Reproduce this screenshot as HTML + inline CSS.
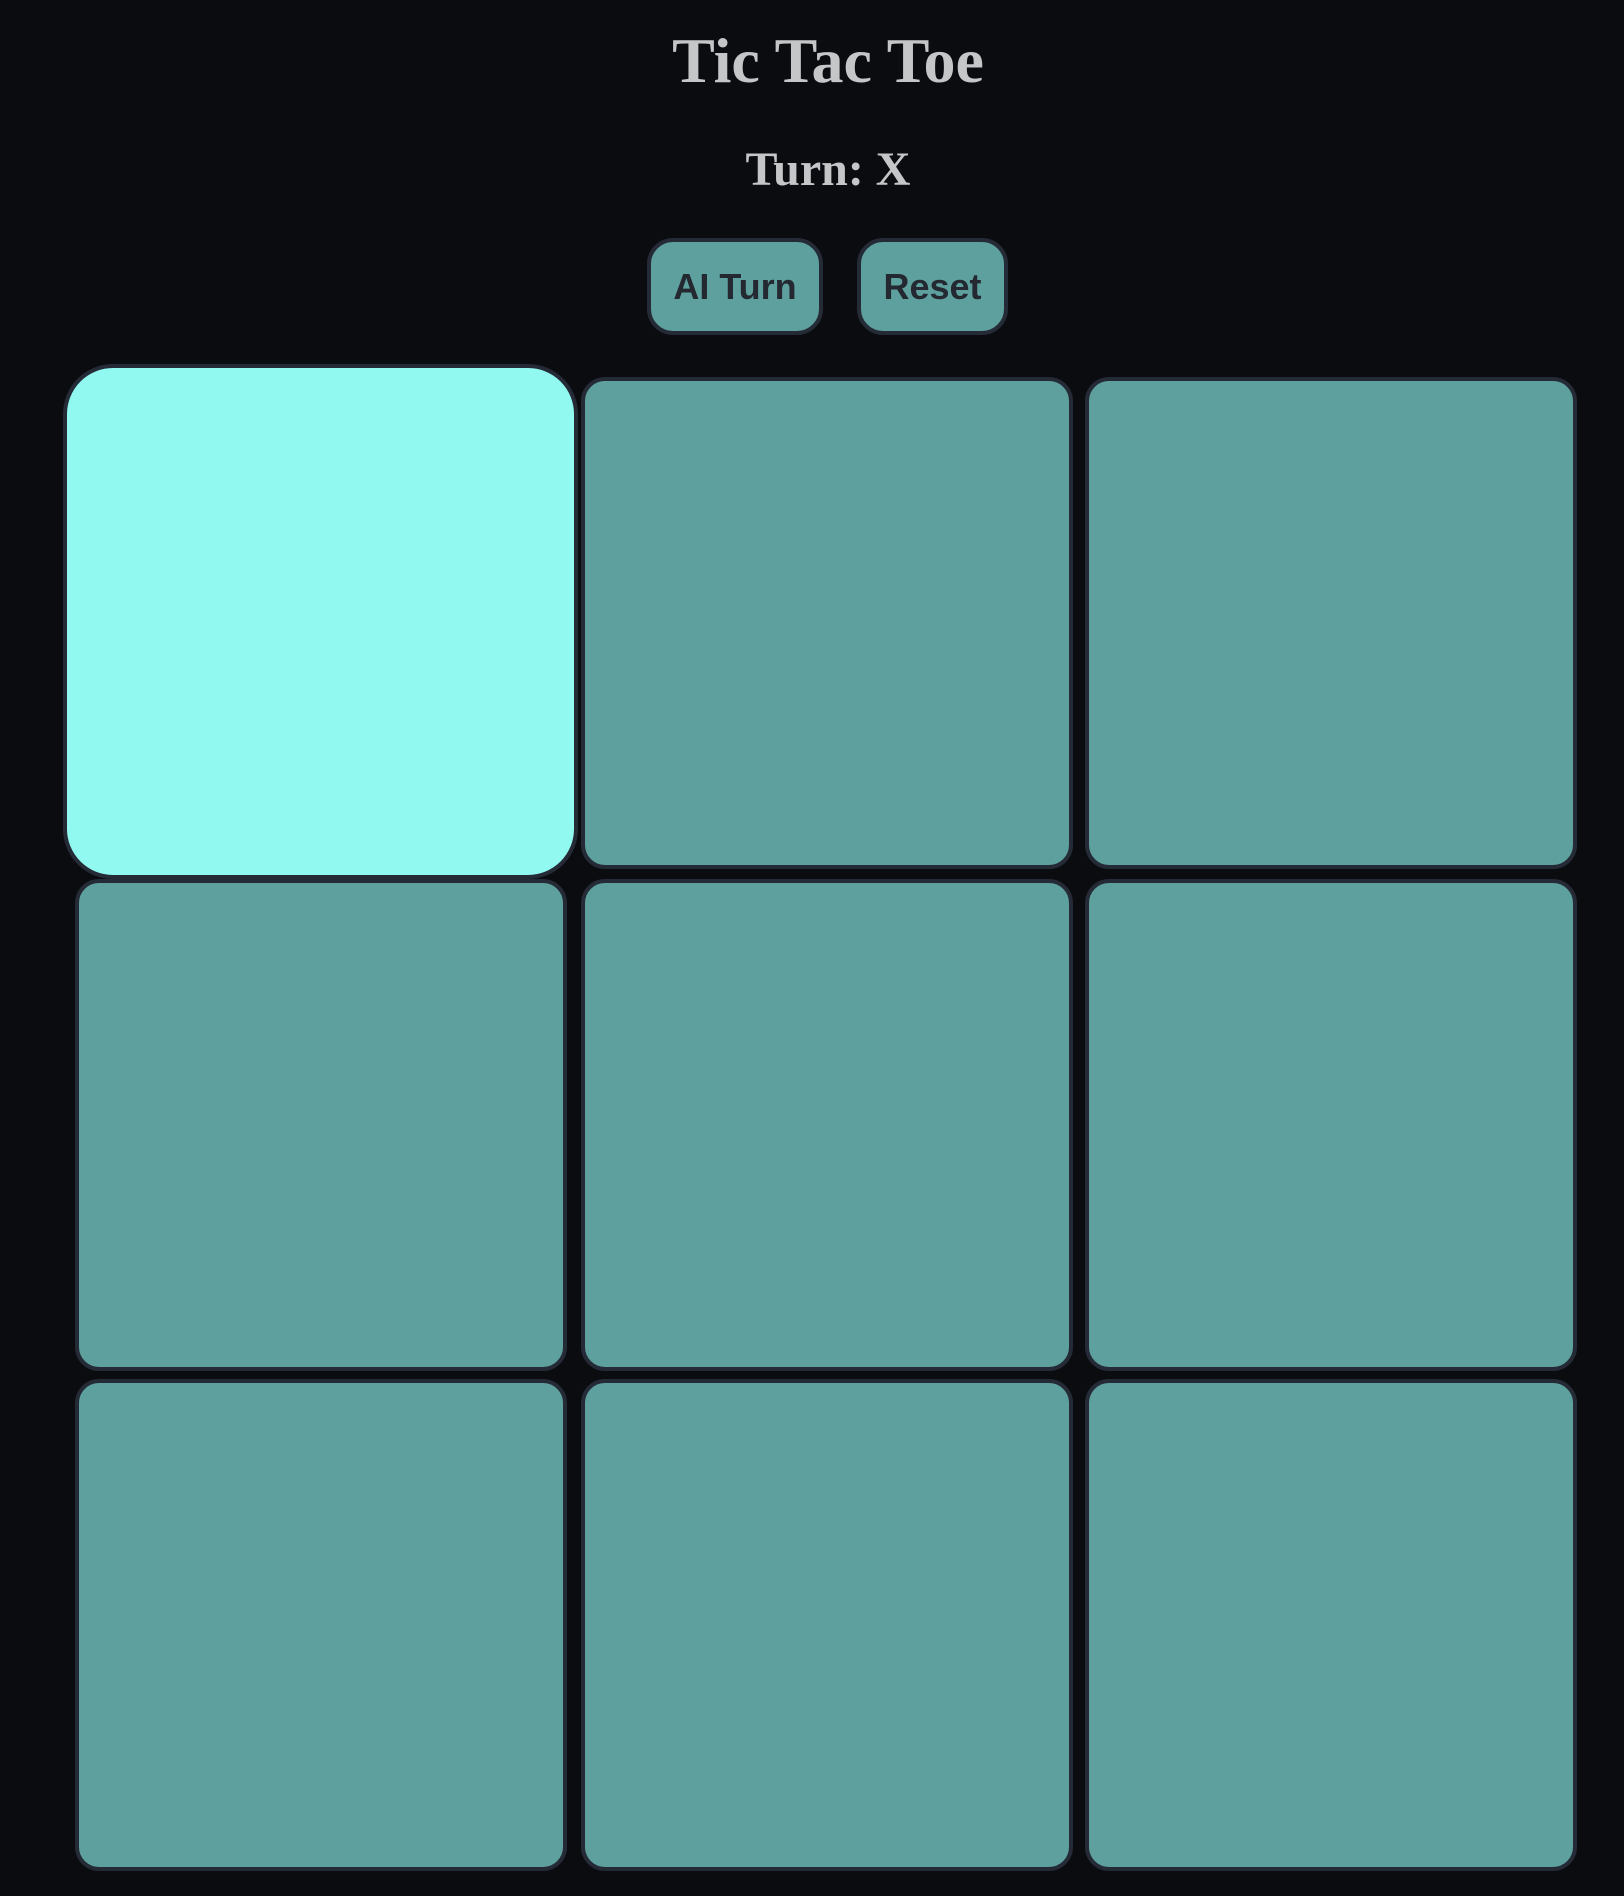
<!DOCTYPE html>
<html><head><meta charset="utf-8"><style>
html,body{margin:0;padding:0;background:#0b0c10;width:1624px;height:1896px;overflow:hidden;}
.t{position:absolute;left:16px;width:1624px;text-align:center;font-family:"Liberation Serif",serif;font-weight:bold;color:#c5c6c7;line-height:1;}
.b{position:absolute;top:238px;height:97px;box-sizing:border-box;border:4px solid #252b36;border-radius:26px;background:#5ea09e;color:#232831;font:bold 36px "Liberation Sans",sans-serif;display:flex;align-items:center;justify-content:center;}
.c{position:absolute;box-sizing:border-box;border:4px solid #252b36;border-radius:24px;background:#5ea09e;width:492px;height:492px;}
</style></head><body>
<div class="t" style="top:29px;font-size:64px;">Tic Tac Toe</div>
<div class="t" style="top:146px;font-size:48px;">Turn: X</div>
<div class="b" style="left:647px;width:176px;">AI Turn</div>
<div class="b" style="left:857px;width:151px;">Reset</div>
<div class="c" style="left:581px;top:377px;"></div>
<div class="c" style="left:1085px;top:377px;"></div>
<div class="c" style="left:75px;top:879px;"></div>
<div class="c" style="left:581px;top:879px;"></div>
<div class="c" style="left:1085px;top:879px;"></div>
<div class="c" style="left:75px;top:1379px;"></div>
<div class="c" style="left:581px;top:1379px;"></div>
<div class="c" style="left:1085px;top:1379px;"></div>
<div class="c" style="left:63px;top:364px;width:515px;height:515px;border-radius:50px;background:#92f9f0;"></div>
</body></html>
